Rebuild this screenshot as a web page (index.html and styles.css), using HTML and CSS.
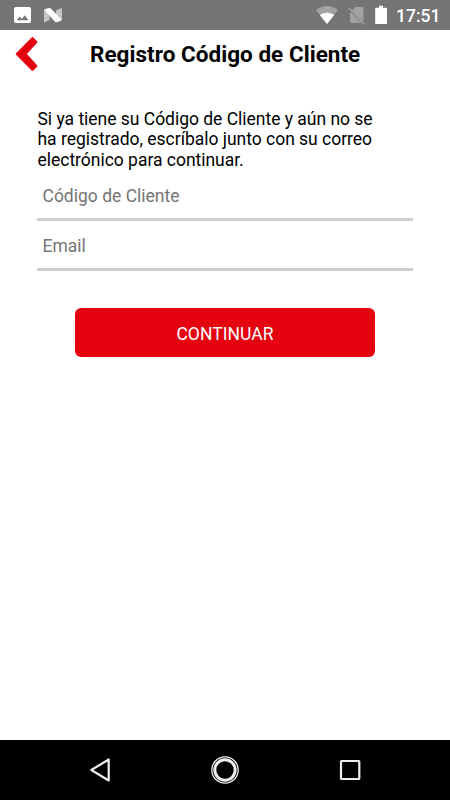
FILE: index.html
```html
<!DOCTYPE html>
<html lang="es">
<head>
<meta charset="utf-8">
<title>Registro Código de Cliente</title>
<link rel="stylesheet" href="styles.css">
</head>
<body>
<div class="screen">
  <div class="status">
    <svg class="status-icons" width="64" height="30" viewBox="0 0 64 30">
      <path fill="#fff" fill-rule="evenodd" d="M16 7h13q2 0 2 2v12q0 2-2 2H16q-2 0-2-2V9q0-2 2-2zM16.700 20.200h11.800l-3.800-5-2.900 3.800-2-2.500z"/>
      <path fill="#c6c6c6" d="M44 9.500L49.500 12V20L44 22.500zM62 8V20.500L56 18V10.500z"/>
      <path fill="#fff" d="M44.300 9.800Q46 8 50.300 8L61.500 19.500Q60 22.200 55.500 22.200z"/>
    </svg>
    <svg class="signals" width="72" height="30" viewBox="0 0 72 30">
      <path fill="#a2a2a2" d="M0 10Q11 2 22 10L11 24z"/>
      <path fill="#fff" d="M3.800 15Q11 10.500 18.200 15L11 24z"/>
      <path fill="#a2a2a2" d="M39.500 7h7q1 0 1 1v14L36 10.500zM34 11.500L45.500 23H35.500q-1.500 0-1.500-1.500z"/>
      <path stroke="#a2a2a2" stroke-width="1.400" d="M33 8L48 24"/>
      <path fill="#fff" d="M63 5.700h4v2h3.200q.8 0 .8.800v14.700q0 .8-.8.800H60q-.8 0-.8-.8V8.500q0-.8.800-.8h3z"/>
    </svg>
    <span class="clock">17:51</span>
  </div>
  <header class="header">
    <svg class="back" width="24" height="36" viewBox="0 0 24 36">
      <path fill="#e4030f" stroke="#e4030f" stroke-width="2.400" stroke-linejoin="round" d="M17.500 2.300L21.200 6 10.400 18 21.200 30 17.500 33.700 1.900 18z"/>
    </svg>
    <h1 class="title">Registro Código de Cliente</h1>
  </header>
  <main class="content">
    <p class="intro">Si ya tiene su Código de Cliente y aún no se<br>ha registrado, escríbalo junto con su correo<br>electrónico para continuar.</p>
    <input class="field" type="text" placeholder="Código de Cliente">
    <input class="field" type="email" placeholder="Email">
    <button class="submit">CONTINUAR</button>
  </main>
  <nav class="nav">
    <svg width="30" height="30" viewBox="0 0 30 30"><path fill="none" stroke="#eee" stroke-width="2.200" stroke-linejoin="round" d="M18.700 4.500V25.500L1.300 15z" transform="translate(5)"/></svg>
    <svg width="30" height="30" viewBox="0 0 30 30" fill="none" stroke="#eee"><circle cx="15" cy="15" r="13.200" stroke-width="1.300"/><circle cx="15" cy="15" r="10.200" stroke-width="3"/></svg>
    <svg width="30" height="30" viewBox="0 0 30 30"><rect x="6" y="6" width="18.300" height="18" rx=".5" fill="none" stroke="#eee" stroke-width="2.200"/></svg>
  </nav>
</div>
</body>
</html>
```
FILE: styles.css
```css
* { box-sizing: border-box; }
body { margin: 0; font-family: Roboto, sans-serif; background: #fff; }
.screen { width: 450px; height: 800px; display: flex; flex-direction: column; }
.status { height: 30px; background: #757575; display: flex; align-items: center; padding-right: 10px; }
.signals { margin-left: auto; }
.clock { color: #fff; font-size: 17.5px; font-weight: 500; line-height: 30px; margin-left: 8px; padding-top: 2px; width: 44px; }
.header { height: 50px; display: flex; padding-left: 15px; }
.back { margin-top: 6px; flex: none; }
.title { margin: 0 0 0 51px; font-size: 22.5px; letter-spacing: .03px; font-weight: 700; line-height: 48px; color: #000; white-space: nowrap; }
.content { flex: 1; display: flex; flex-direction: column; padding: 28.5px 37.500px 0 37px; }
.intro { margin: 0 0 .5px; padding-left: .5px; font-size: 17.5px; letter-spacing: -.02px; line-height: 20.500px; color: #000; white-space: nowrap; }
.field { height: 50px; width: 100%; border: 0; border-bottom: 3px solid #ccc; padding: 3px 5.500px 0; font: 17.5px Roboto, sans-serif; outline: 0; border-radius: 0; background: #fff; }
.field::placeholder { color: #757575; opacity: 1; }
.submit { align-self: center; width: 300px; height: 49px; margin-top: 37px; border: 0; border-radius: 6px; background: #e4030f; color: #fff; font: 17.5px Roboto, sans-serif; letter-spacing: .05px; padding: 3px 0 0 .5px; }
.nav { height: 60px; background: #000; display: flex; justify-content: center; align-items: center; gap: 95px; }
```
